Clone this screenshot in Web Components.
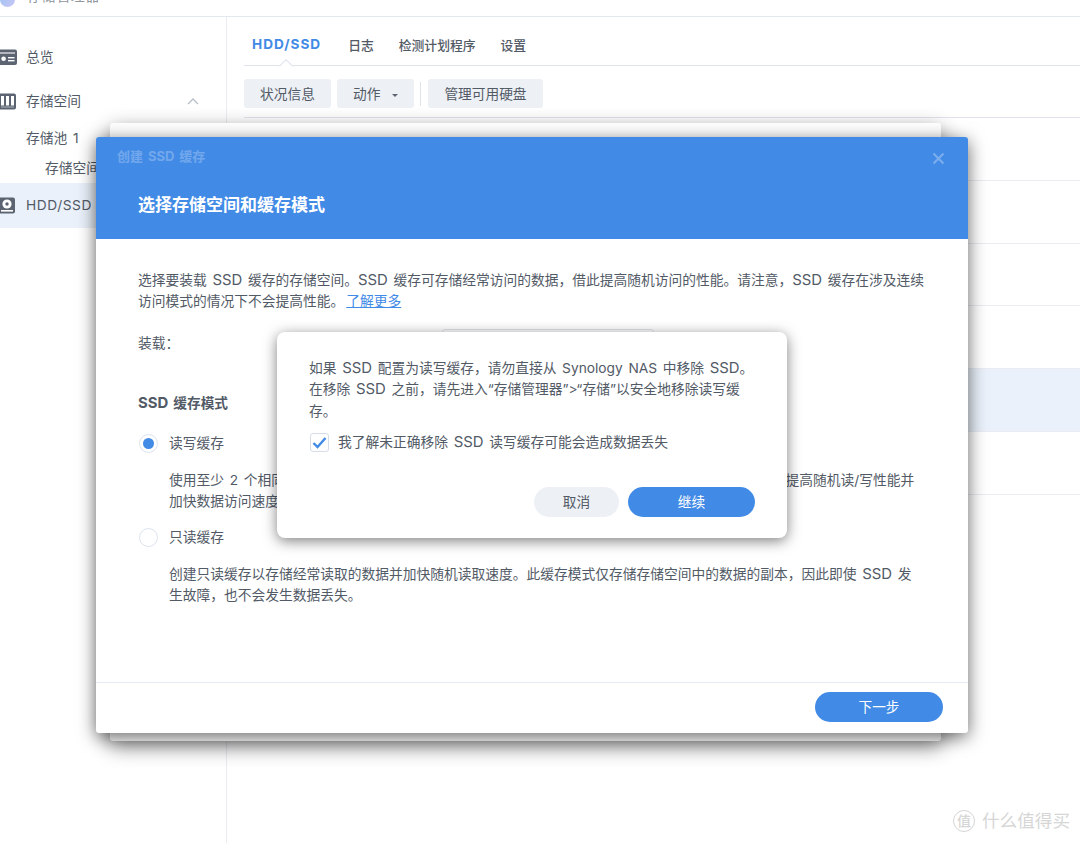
<!DOCTYPE html>
<html lang="zh-CN">
  <head>
    <meta charset="UTF-8" />
    <title>存储管理器</title>
    <style>
      html,
      body {
        margin: 0;
        height: 100%;
        background: #fff;
      }
      body {
        font-family: Inter, "Noto Sans CJK SC", sans-serif;
        font-size: 13.75px;
        word-spacing: 1.8px;
        color: #525a66;
        overflow: hidden;
      }
      /* the SSD runs are a bit wider in the original than Inter gives */
      .l {
        font-size: 14.9px;
        line-height: 1;
      }
    </style>
  </head>
  <body>
    <storage-app>
      <side-item slot="side" level="0" icon="overview">总览</side-item>
      <side-item slot="side" level="0" icon="storage" chevron>存储空间</side-item>
      <side-item slot="side" level="1">存储池 1</side-item>
      <side-item slot="side" level="2">存储空间</side-item>
      <side-item slot="side" level="0" icon="disk" active>HDD/SSD</side-item>
      <tab-bar slot="main"></tab-bar>
      <tool-bar slot="main"></tool-bar>
      <disk-list slot="main"></disk-list>
    </storage-app>

    <back-window></back-window>

    <wizard-window heading="创建 SSD 缓存" subtitle="选择存储空间和缓存模式">
      <p class="intro">
        选择要装载 <span class="l">SSD</span> 缓存的存储空间。<span class="l">SSD</span> 缓存可存储经常访问的数据，借此提高随机访问的性能。请注意，<span class="l">SSD</span> 缓存在涉及连续<br />访问模式的情况下不会提高性能。<a>了解更多</a>
      </p>
      <mount-row></mount-row>
      <h4><span class="l">SSD</span> 缓存模式</h4>
      <radio-option checked label="读写缓存">
        使用至少 2 个相同型号的 <span class="l">SSD</span> 创建读写缓存，以存储经常访问和写入的数据并保留在缓存中， 借此提高随机读/写性能并<br />加快数据访问速度。
      </radio-option>
      <radio-option label="只读缓存">
        创建只读缓存以存储经常读取的数据并加快随机读取速度。此缓存模式仅存储存储空间中的数据的副本，因此即使 <span class="l">SSD</span> 发<br />生故障，也不会发生数据丢失。
      </radio-option>
    </wizard-window>

    <alert-dialog>
      如果 <span class="l">SSD</span> 配置为读写缓存，请勿直接从 Synology NAS 中移除 <span class="l">SSD</span>。<br />在移除 <span class="l">SSD</span> 之前，请先进入“存储管理器”&gt;“存储”以安全地移除读写缓<br />存。
    </alert-dialog>

    <water-mark></water-mark>

    <script>
      const ICONS = {
        overview:
          '<svg width="17" height="17" viewBox="0 0 17 17"><rect x="-3" y="0.5" width="20" height="15.5" rx="2" fill="#5b6470"/><rect x="-1" y="3.4" width="16" height="1.2" fill="#fff" opacity=".9"/><circle cx="3.6" cy="9.8" r="2.3" fill="#fff"/><rect x="8" y="8" width="6.5" height="1.4" fill="#fff"/><rect x="8" y="11" width="6.5" height="1.4" fill="#fff"/></svg>',
        storage:
          '<svg width="17" height="17" viewBox="0 0 17 17"><rect x="-3" y="0.5" width="19" height="16" rx="2" fill="#5b6470"/><rect x="1" y="3" width="3" height="9.5" fill="#fff"/><rect x="6" y="3" width="3" height="9.5" fill="#fff"/><rect x="11" y="3" width="3" height="9.5" fill="#fff"/><rect x="1" y="13.5" width="13" height="1" fill="#fff" opacity=".5"/></svg>',
        disk:
          '<svg width="17" height="17" viewBox="0 0 17 17"><rect x="-2" y="0.5" width="17" height="16" rx="2" fill="#5b6470"/><circle cx="7" cy="7" r="4.6" fill="#fff"/><circle cx="7" cy="7" r="1.7" fill="#5b6470"/><rect x="1" y="13" width="12" height="1.6" fill="#fff"/></svg>',
      };

      class StorageApp extends HTMLElement {
        constructor() {
          super();
          this.attachShadow({ mode: "open" });
          this.shadowRoot.innerHTML = `
            <style>
              :host { display: grid; grid-template-columns: 227px 1fr; grid-template-rows: 17px 1fr; height: 843px; }
              header { grid-column: 1 / 3; display: flex; gap: 12px; overflow: hidden; border-bottom: 1px solid #e4e9f0; box-sizing: border-box; height: 17px; color: #8f959e; }
              .logo { width: 15px; height: 15px; margin-top: -8px; border-radius: 50%; background: linear-gradient(135deg, #9cc4f2, #c9c6f5); flex: none; }
              .name { margin-top: -14px; line-height: 20px; font-size: 14px; letter-spacing: .6px; }
              aside { padding-top: 18px; display: flex; flex-direction: column; border-right: 1px solid #e9edf3; }
              main { padding: 0 0 0 17px; min-width: 0; }
            </style>
            <header><span class="logo"></span><span class="name">存储管理器</span></header>
            <aside><slot name="side"></slot></aside>
            <main><slot name="main"></slot></main>`;
        }
      }

      class SideItem extends HTMLElement {
        constructor() {
          super();
          const level = this.getAttribute("level");
          const icon = ICONS[this.getAttribute("icon")] || "";
          const chevron = this.hasAttribute("chevron")
            ? '<svg class="chev" width="12" height="7" viewBox="0 0 12 7"><path d="M1 6l5-5 5 5" fill="none" stroke="#b9bfc8" stroke-width="1.3"/></svg>'
            : "";
          this.attachShadow({ mode: "open" });
          this.shadowRoot.innerHTML = `
            <style>
              :host { display: flex; align-items: center; height: 44px; color: #535b67; }
              :host([level="1"]) { height: 30px; padding-left: 26px; }
              :host([level="2"]) { height: 30px; padding-left: 45px; }
              :host([active]) { height: 45px; background: #eaf1fa; letter-spacing: .55px; }
              .icon { width: 17px; height: 17px; margin-right: 9px; }
              .chev { margin-left: auto; margin-right: 27px; }
              slot { display: block; white-space: nowrap; padding-bottom: 2px; }
            </style>
            ${level === "0" ? `<span class="icon">${icon}</span>` : ""}
            <slot></slot>${chevron}`;
        }
      }

      class TabBar extends HTMLElement {
        constructor() {
          super();
          this.attachShadow({ mode: "open" });
          this.shadowRoot.innerHTML = `
            <style>
              :host { display: flex; height: 49px; box-sizing: border-box; padding: 6px 0 0 8px; border-bottom: 1px solid #dfe4ec; position: relative; font-size: 12.8px; font-weight: 500; color: #525a66; align-items: center; gap: 25px; }
              .on { color: #418ae6; font-weight: 700; font-size: 13.6px; letter-spacing: 1px; margin-right: 2px; }
              .notch { position: absolute; left: 37px; bottom: -1px; width: 9px; height: 9px; background: #fff; border: 1px solid #dfe4ec; border-width: 1px 0 0 1px; transform: translateY(5px) rotate(45deg); }
            </style>
            <span class="on">HDD/SSD</span><span>日志</span><span>检测计划程序</span><span>设置</span>
            <span class="notch"></span>`;
        }
      }

      class ToolBar extends HTMLElement {
        constructor() {
          super();
          this.attachShadow({ mode: "open" });
          this.shadowRoot.innerHTML = `
            <style>
              :host { display: flex; align-items: center; height: 29px; margin-top: 13px; margin-bottom: 9px; gap: 6px; }
              button { all: unset; box-sizing: border-box; height: 29px; padding-bottom: 2px; background: #edf0f5; border-radius: 3px; font-size: 13.7px; color: #525a66; text-align: center; }
              .a { width: 87px; }
              .b { width: 77px; }
              .c { width: 115px; margin-left: 1px; }
              i { display: inline-block; margin-left: 6px; vertical-align: 2px; border: 3.5px solid transparent; border-top-color: #5b6470; border-bottom: 0; }
              hr { all: unset; width: 1px; height: 24px; background: #dfe4ec; }
            </style>
            <button class="a">状况信息</button>
            <button class="b">动作 <i></i></button>
            <hr />
            <button class="c">管理可用硬盘</button>`;
        }
      }

      class DiskList extends HTMLElement {
        constructor() {
          super();
          this.attachShadow({ mode: "open" });
          this.shadowRoot.innerHTML = `
            <style>
              :host { display: block; border-top: 1px solid #dfe4ec; }
              div { height: 62.8px; box-sizing: border-box; border-bottom: 1px solid #e9edf3; }
              .on { background: #eaf1fa; }
            </style>
            <div></div><div></div><div></div><div></div><div class="on"></div><div></div>`;
        }
      }

      class BackWindow extends HTMLElement {
        constructor() {
          super();
          this.attachShadow({ mode: "open" });
          this.shadowRoot.innerHTML = `
            <style>
              :host { position: absolute; left: 110px; top: 123px; width: 831px; height: 618px; background: #fff; border-radius: 3px; box-shadow: 0 6px 20px rgba(0, 0, 0, .45); }
            </style>`;
        }
      }

      class WizardWindow extends HTMLElement {
        constructor() {
          super();
          this.attachShadow({ mode: "open" });
          this.shadowRoot.innerHTML = `
            <style>
              :host { position: absolute; left: 96px; top: 137px; width: 872px; height: 596px; background: #fff; border-radius: 3px; box-shadow: 0 4px 18px rgba(0, 0, 0, .6); display: flex; flex-direction: column; }
              header { height: 102px; background: #418ae6; border-radius: 3px 3px 0 0; color: #fff; position: relative; flex: none; box-sizing: border-box; padding: 9px 21px 0; }
              .small { font-size: 13px; font-weight: 700; line-height: 20px; opacity: .25; }
              .big { margin-top: 29px; margin-left: 21px; font-size: 17px; font-weight: 700; line-height: 20px; }
              .x { position: absolute; right: 23px; top: 15px; }
              .body { flex: 1; padding: 31px 42px 0; line-height: 21px; }
              footer { height: 51px; box-sizing: border-box; border-top: 1px solid #e4ebf3; display: flex; justify-content: flex-end; align-items: flex-start; padding: 9px 25px 0 0; flex: none; }
              footer button { all: unset; width: 128px; height: 30px; border-radius: 15px; background: #418ae6; color: #fff; font-size: 13.7px; text-align: center; line-height: 30px; }
              ::slotted(p) { margin: 0; }
              ::slotted(h4) { margin: 35px 0 19px; font-size: 13.7px; font-weight: 700; line-height: 21px; }
            </style>
            <header>
              <div class="small">${this.getAttribute("heading")}</div>
              <div class="big">${this.getAttribute("subtitle")}</div>
              <svg class="x" width="13" height="13" viewBox="0 0 13 13"><path d="M1.5 1.5l10 10M11.5 1.5l-10 10" stroke="#fff" stroke-opacity=".3" stroke-width="2.2"/></svg>
            </header>
            <div class="body"><slot></slot></div>
            <footer><button>下一步</button></footer>`;
        }
        connectedCallback() {
          const link = this.querySelector("a");
          if (link) {
            link.style.color = "#418ae6";
            link.style.textDecoration = "underline";
            link.style.marginLeft = "2px";
          }
        }
      }

      class MountRow extends HTMLElement {
        constructor() {
          super();
          this.attachShadow({ mode: "open" });
          this.shadowRoot.innerHTML = `
            <style>
              :host { display: flex; align-items: center; height: 30px; margin-top: 16px; }
              span { width: 304px; }
              div { width: 212px; height: 28px; box-sizing: border-box; border: 1px solid #dfe4ec; border-radius: 3px; }
            </style>
            <span>装载：</span><div></div>`;
        }
      }

      class RadioOption extends HTMLElement {
        constructor() {
          super();
          this.attachShadow({ mode: "open" });
          this.shadowRoot.innerHTML = `
            <style>
              :host { display: block; margin-bottom: 15px; }
              .row { display: flex; align-items: center; gap: 11px; height: 21px; margin-left: 1px; margin-bottom: 16px; }
              .dot { width: 19px; height: 19px; box-sizing: border-box; border: 1px solid #dce4ee; border-radius: 50%; display: flex; align-items: center; justify-content: center; background: #fff; }
              :host([checked]) .dot::after { content: ""; width: 11px; height: 11px; border-radius: 50%; background: #418ae6; }
              .desc { margin-left: 31px; white-space: nowrap; }
            </style>
            <div class="row"><span class="dot"></span><span>${this.getAttribute("label")}</span></div>
            <div class="desc"><slot></slot></div>`;
        }
      }

      class AlertDialog extends HTMLElement {
        constructor() {
          super();
          this.attachShadow({ mode: "open" });
          this.shadowRoot.innerHTML = `
            <style>
              :host { position: absolute; left: 277px; top: 332px; width: 510px; height: 206px; box-sizing: border-box; padding: 26px 32px 0; background: #fff; border-radius: 8px; box-shadow: 0 3px 14px rgba(0, 0, 0, .5); line-height: 21.4px; display: flex; flex-direction: column; }
              .check { display: flex; align-items: center; gap: 9px; margin-top: 10px; height: 21px; }
              .l { font-size: 14.9px; line-height: 1; }
              .box { width: 19px; height: 19px; margin-left: 1px; box-sizing: border-box; border: 1px solid #d5dde8; border-radius: 3px; display: flex; align-items: center; justify-content: center; }
              .actions { display: flex; justify-content: flex-end; gap: 9px; margin-top: 34px; }
              button { all: unset; height: 30px; border-radius: 15px; font-size: 13.7px; text-align: center; line-height: 30px; }
              .cancel { width: 85px; background: #edf0f5; color: #525a66; }
              .go { width: 127px; background: #418ae6; color: #fff; }
            </style>
            <div><slot></slot></div>
            <div class="check">
              <span class="box"><svg width="15" height="13" viewBox="0 0 15 13"><path d="M1.5 7l4 4 8-9" fill="none" stroke="#418ae6" stroke-width="2.4"/></svg></span>
              <span>我了解未正确移除 <span class="l">SSD</span> 读写缓存可能会造成数据丢失</span>
            </div>
            <div class="actions"><button class="cancel">取消</button><button class="go">继续</button></div>`;
        }
      }

      class WaterMark extends HTMLElement {
        constructor() {
          super();
          this.attachShadow({ mode: "open" });
          this.shadowRoot.innerHTML = `
            <style>
              :host { position: absolute; right: 10px; top: 809px; display: flex; align-items: center; gap: 7px; color: #d6d6d6; font-size: 17.6px; line-height: 24px; }
              b { width: 20px; height: 20px; border: 1px solid #d6d6d6; border-radius: 50%; font-size: 14px; font-weight: 500; line-height: 20px; text-align: center; }
            </style>
            <b>值</b><span>什么值得买</span>`;
        }
      }

      customElements.define("storage-app", StorageApp);
      customElements.define("side-item", SideItem);
      customElements.define("tab-bar", TabBar);
      customElements.define("tool-bar", ToolBar);
      customElements.define("disk-list", DiskList);
      customElements.define("back-window", BackWindow);
      customElements.define("wizard-window", WizardWindow);
      customElements.define("mount-row", MountRow);
      customElements.define("radio-option", RadioOption);
      customElements.define("alert-dialog", AlertDialog);
      customElements.define("water-mark", WaterMark);
    </script>
  </body>
</html>
